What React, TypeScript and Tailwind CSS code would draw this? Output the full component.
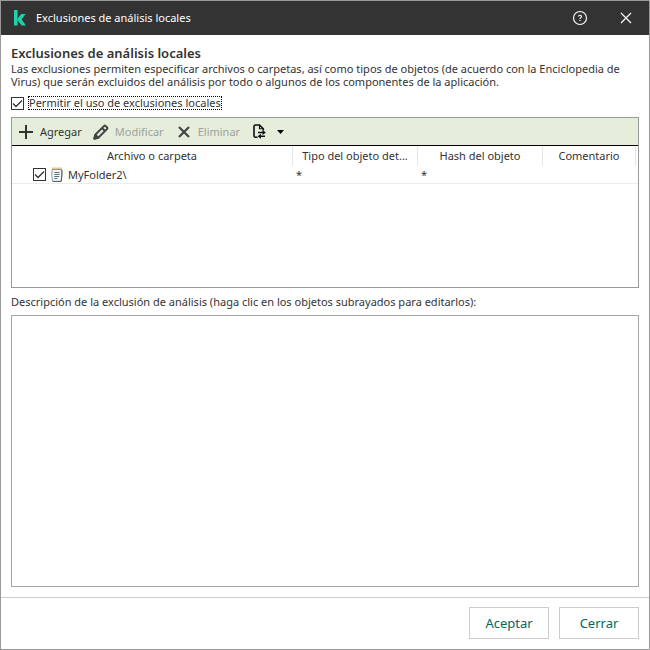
import React from 'react';

const columns = [
  { title: 'Archivo o carpeta', width: 'w-[281px]' },
  { title: 'Tipo del objeto det...', width: 'w-[125px]' },
  { title: 'Hash del objeto', width: 'w-[125px]' },
  { title: 'Comentario', width: 'w-[93px]' },
  { title: '', width: '' },
];

const exclusions = [{ path: 'MyFolder2\\', type: '*', hash: '*', comment: '' }];

const LogoIcon = () => (
  <svg width="13" height="16" viewBox="0 0 13 16" aria-hidden="true">
    <path d="M1 0h3.600v15.500H1z" fill="#1fd0ab" />
    <path d="M8.200 4H12.600L8.600 9.500l4.400 6H8.600L4.400 10V9z" fill="#1fd0ab" />
  </svg>
);

const HelpIcon = () => (
  <svg width="16" height="16" viewBox="0 0 16 16" fill="none" stroke="#fff" aria-hidden="true">
    <circle cx="8" cy="8" r="6.5" strokeWidth="1.1" />
    <path d="M6.500 6.600c0-1.800 3-1.800 3 0 0 1-1.500 1.100-1.500 2.300" strokeWidth="1.1" />
    <path d="M8 9.900v1.100" strokeWidth="1.2" />
  </svg>
);

const CloseIcon = () => (
  <svg width="12" height="12" viewBox="0 0 12 12" stroke="#fff" strokeWidth="1.2" aria-hidden="true">
    <path d="M1 1l10 10M11 1L1 11" />
  </svg>
);

const PlusIcon = () => (
  <svg width="14" height="14" viewBox="0 0 14 14" stroke="#333" strokeWidth="2" aria-hidden="true">
    <path d="M7 0v14M0 7h14" />
  </svg>
);

const PencilIcon = () => (
  <svg width="16" height="16" viewBox="0 0 16 16" fill="none" stroke="#444" strokeWidth="2" strokeLinejoin="round" aria-hidden="true">
    <path d="M1.500 14.500l1.300-4.300 8.100-8.100q.900-.900 1.800 0l1.200 1.200q.900.900 0 1.800l-8.100 8.100z" />
    <path d="M9 4l3 3" />
    <path d="M1.200 14.800l1.100-4 2.900 2.900z" fill="#444" />
  </svg>
);

const RemoveIcon = () => (
  <svg width="12" height="12" viewBox="0 0 12 12" stroke="#444" strokeWidth="2.2" aria-hidden="true">
    <path d="M1 1l10 10M11 1L1 11" />
  </svg>
);

const TransferIcon = () => (
  <svg width="13" height="15" viewBox="0 0 13 15" fill="none" stroke="#111" strokeWidth="1.6" aria-hidden="true">
    <path d="M4.500 13.200H2.500Q1 13.200 1 11.700V2.500Q1 1 2.500 1H6.500l3.800 3.800v1.700" />
    <path d="M6.500 1v3.800h3.800" strokeWidth="1.100" />
    <path d="M5 8.500h5.500M12 12.200H6.500" strokeWidth="1.400" />
    <path d="M9.500 6l3.400 2.500-3.400 2.500zM8 9.700l-3.400 2.500L8 14.700z" fill="#111" stroke="none" />
  </svg>
);

const NotepadIcon = () => (
  <svg width="12" height="15" viewBox="0 0 12 15" fill="none" aria-hidden="true">
    <path d="M1.200 2.500h9.600q.400 6-.800 12H1.500Q.300 8 1.200 2.500z" fill="#f3f8fa" stroke="#8b989e" />
    <path d="M10.900 3q.300 6-.700 11.400H2" stroke="#4f5b62" />
    <path d="M3.300 5.500h5.200M3.300 7.500h5.200M3.300 9.500h5M3.300 11.500h3.200" stroke="#5b6d73" />
    <path d="M1.500 1.700h10" stroke="#c98f36" strokeWidth="2.200" strokeDasharray="1 1" />
  </svg>
);

const CheckBox = ({ id, label }: { id: string; label?: string }) => (
  <span className="grid h-[13px] w-[13px] shrink-0">
    <input
      id={id}
      type="checkbox"
      defaultChecked
      aria-label={label}
      className="peer col-start-1 row-start-1 h-[13px] w-[13px] appearance-none border border-[#333] bg-white"
    />
    <svg
      viewBox="0 0 13 13"
      fill="none"
      stroke="#333"
      strokeWidth="1.3"
      className="pointer-events-none invisible col-start-1 row-start-1 h-[13px] w-[13px] peer-checked:visible"
      aria-hidden="true"
    >
      <path d="M2 6.500l3 3 6-6" />
    </svg>
  </span>
);

const TitleBar = () => (
  <header className="flex h-[34px] shrink-0 items-center bg-[#333] pl-3 pr-[13px] text-white">
    <LogoIcon />
    <span className="ml-[10px] flex-1">Exclusiones de análisis locales</span>
    <button type="button" aria-label="Ayuda">
      <HelpIcon />
    </button>
    <button type="button" aria-label="Cerrar ventana" className="ml-8 mr-[4px]">
      <CloseIcon />
    </button>
  </header>
);

const Toolbar = () => (
  <div className="flex h-7 items-center border-b border-black bg-[#e4eeda] px-[7px]">
    <button type="button" className="flex items-center gap-[7px]">
      <PlusIcon />
      Agregar
    </button>
    <button type="button" disabled className="ml-[11px] flex items-center gap-[6px] text-[#a0a0a0]">
      <PencilIcon />
      Modificar
    </button>
    <button type="button" disabled className="ml-[14px] flex items-center gap-2 text-[#a0a0a0]">
      <RemoveIcon />
      Eliminar
    </button>
    <button type="button" aria-label="Importar o exportar" className="ml-[13px] flex items-center gap-[11px]">
      <TransferIcon />
      <svg width="7" height="4" viewBox="0 0 7 4" aria-hidden="true">
        <path d="M0 0h7L3.500 4z" fill="#000" />
      </svg>
    </button>
  </div>
);

const ExclusionsTable = () => (
  <table className="w-full table-fixed border-separate border-spacing-0">
    <thead>
      <tr className="h-5">
        {columns.map((column, index) => (
          <th
            key={index}
            className={`${column.width} whitespace-nowrap border-r border-[#e5e5e5] p-0 font-normal last:border-r-0`}
          >
            {column.title}
          </th>
        ))}
      </tr>
    </thead>
    <tbody>
      {exclusions.map((item) => (
        <tr key={item.path} className="h-[18px] *:border-b *:border-[#ececec]">
          <td className="py-0 pl-[21px]">
            <div className="flex items-center">
              <CheckBox id="exclusion-enabled" label={item.path} />
              <span className="mx-[5px]">
                <NotepadIcon />
              </span>
              {item.path}
            </div>
          </td>
          <td className="py-0 pl-[3px]">{item.type}</td>
          <td className="py-0 pl-[3px]">{item.hash}</td>
          <td className="py-0 pl-[3px]">{item.comment}</td>
          <td />
        </tr>
      ))}
    </tbody>
  </table>
);

const App: React.FC = () => {
  return (
    <div className="flex min-h-screen flex-col border border-[#999] bg-white font-['Noto_Sans',sans-serif] text-[11px] leading-[14px] text-[#333]">
      <TitleBar />
      <main className="flex flex-1 flex-col px-[10px] pb-[10px] pt-[10px]">
        <h1 className="text-[13px] font-semibold leading-[17px]">Exclusiones de análisis locales</h1>
        <p className="leading-[13px]">
          Las exclusiones permiten especificar archivos o carpetas, así como tipos de objetos (de acuerdo con la Enciclopedia de
          Virus) que serán excluidos del análisis por todo o algunos de los componentes de la aplicación.
        </p>
        <div className="mt-2 flex items-center gap-1">
          <CheckBox id="allow-local" />
          <label htmlFor="allow-local" className="border border-dotted border-black leading-3">
            Permitir el uso de exclusiones locales
          </label>
        </div>

        <section className="mt-[7px] h-[171px] shrink-0 border border-[#999]">
          <Toolbar />
          <ExclusionsTable />
        </section>

        <label htmlFor="description" className="mb-[6px] mt-[7px]">
          Descripción de la exclusión de análisis (haga clic en los objetos subrayados para editarlos):
        </label>
        <textarea id="description" readOnly className="block w-full flex-1 resize-none border border-[#a5a5a9]" />
      </main>
      <footer className="flex shrink-0 justify-end gap-[10px] border-t border-[#ccc] px-[10px] pb-[10px] pt-[9px] text-[13px] text-[#00695c]">
        <button type="button" className="h-8 w-20 border border-[#ccc]">
          Aceptar
        </button>
        <button type="button" className="h-8 w-20 border border-[#ccc]">
          Cerrar
        </button>
      </footer>
    </div>
  );
};

export default App;
